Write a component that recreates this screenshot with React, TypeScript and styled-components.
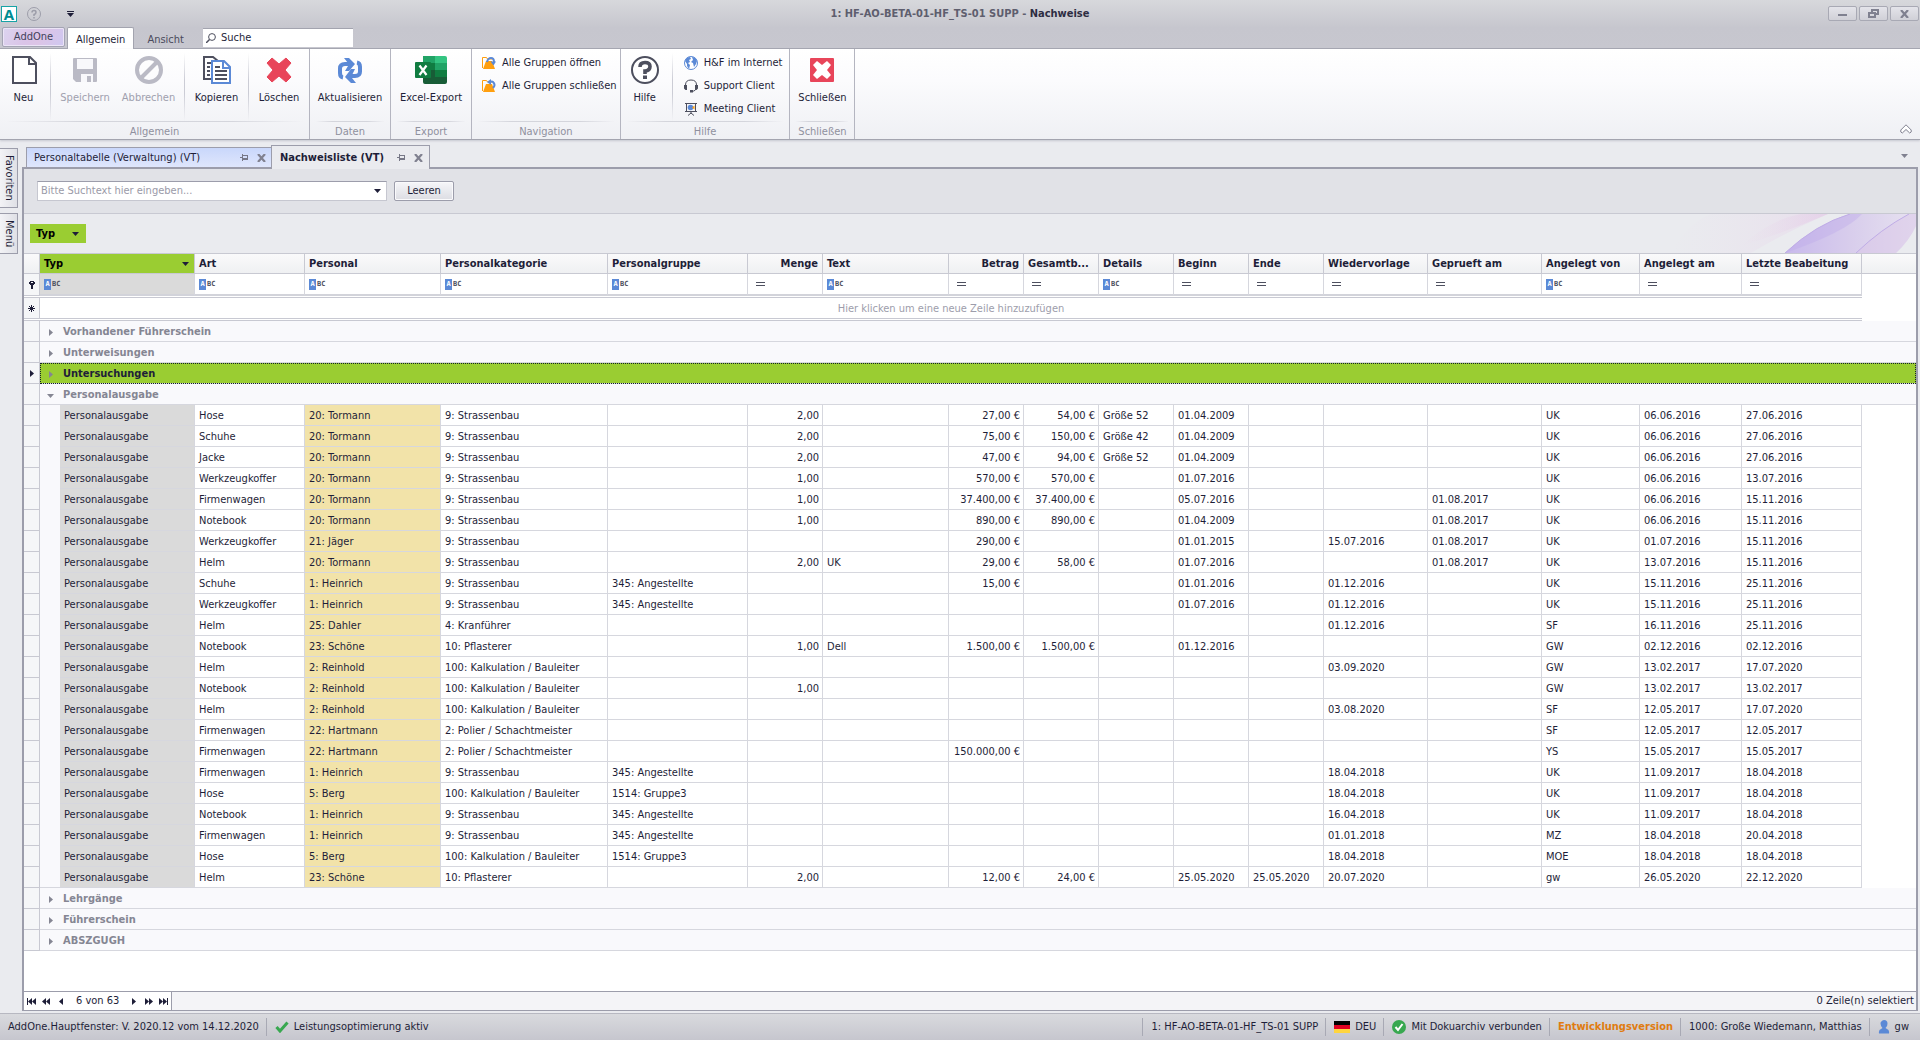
import React from "react";
import styled, { createGlobalStyle, css } from "styled-components";

const ink = "#1e1e38";
const frame = "#9c9dab";
const line = "#d6d7de";
const lineDark = "#c8c9d2";
const lime = "#9acd32";
const blue = "#5b89d6";
const red = "#e8455a";
const slate = "#4d4f5e";

const GlobalStyle = createGlobalStyle`
  * { box-sizing: border-box; }
  body {
    margin: 0;
    background: #eaebef;
    color: ${ink};
    font: 11px/14px "DejaVu Sans Condensed", "Noto Sans", sans-serif;
  }
  button, input { font: inherit; color: inherit; }
  button { border: 0; padding: 0; background: none; white-space: nowrap; }
  svg { display: block; flex: none; }
`;

const Window = styled.div`
  display: flex;
  flex-direction: column;
  min-height: 100vh;
`;

/* ---------- title bar and ribbon tabs ---------- */

const Chrome = styled.header`
  background: linear-gradient(#d7d8dc, #c6c6ce 28px, #c7c7cf);
  border-bottom: 1px solid #a3a4af;
`;

const TitleBar = styled.div`
  display: grid;
  grid-template-columns: 1fr auto 1fr;
  align-items: center;
  height: 27px;
`;

const QuickAccess = styled.div`
  display: flex;
  align-items: center;
  gap: 10px;
  padding-left: 1px;
`;

const Logo = styled.span`
  width: 16px;
  height: 16px;
  border: 1px solid #18a3a6;
  background: #fff;
  color: #008c92;
  font: bold 15px/14px "Open Sans", sans-serif;
  text-align: center;
`;

const QuickButton = styled.button<{ $gap?: boolean }>`
  display: flex;
  margin-left: ${(p) => (p.$gap ? "16px" : "0")};
`;

const Title = styled.h1`
  margin: 0;
  font-size: 11px;
  font-weight: bold;
  color: #5e5e6e;
  strong { color: #2d2d42; }
`;

const WindowButtons = styled.div`
  display: flex;
  justify-content: flex-end;
  gap: 2px;
  padding-right: 1px;
`;

const WindowButton = styled.button`
  display: flex;
  align-items: center;
  justify-content: center;
  width: 29px;
  height: 15px;
  border: 1px solid #a8a9b4;
  border-radius: 2px;
  background: linear-gradient(#e4e4ea, #d0d0d7);
`;

const TabStrip = styled.nav`
  display: flex;
  align-items: flex-end;
  height: 21px;
  padding-left: 2px;
`;

const AppButton = styled.button`
  width: 63px;
  height: 20px;
  margin-bottom: 1px;
  border: 1px solid #a4a4b4;
  border-radius: 2px;
  box-shadow: inset 0 0 0 1px #ebe4f6;
  background: linear-gradient(115deg, #dcd4ef, #dac4e8 40%, #dcc4e6 60%, #cfc8f1);
  color: #42425a;
`;

const RibbonTab = styled.button<{ $active?: boolean }>`
  height: 21px;
  padding: 2px 8px 0;
  margin: 0 3px -1px 2px;
  color: #4a4a5c;
  ${(p) =>
    p.$active &&
    css`
      height: 22px;
      border: 1px solid #a3a4af;
      border-bottom: 0;
      border-radius: 2px 2px 0 0;
      background: #fff;
      color: ${ink};
    `}
`;

const RibbonSearch = styled.label`
  display: flex;
  align-items: center;
  gap: 5px;
  width: 150px;
  height: 19px;
  margin: 0 0 1px 8px;
  padding-left: 3px;
  border-top: 1px solid #a3a4af;
  background: #fff;
`;

const BareInput = styled.input`
  flex: 1;
  min-width: 0;
  padding: 0;
  border: 0;
  outline: 0;
  background: none;
  &::placeholder { color: #9a9aa8; opacity: 1; }
`;

/* ---------- ribbon ---------- */

const Ribbon = styled.section`
  display: flex;
  height: 91px;
  background: linear-gradient(#fff, #fbfbfd 35%, #eff0f4);
  border-bottom: 1px solid #a3a4af;
  box-shadow: 0 1px 2px #c6c7d0;
`;

const Group = styled.div`
  display: flex;
  flex-direction: column;
  border-right: 1px solid #b4b5c0;
`;

const GroupBody = styled.div<{ $end?: boolean }>`
  display: flex;
  flex: 1;
  padding-right: ${(p) => (p.$end ? "3px" : "0")};
`;

const GroupCaption = styled.div`
  height: 18px;
  margin: 0 6px;
  padding-top: 3px;
  border-top: 1px solid;
  border-image: linear-gradient(90deg, transparent, #d4d5dc 25%, #d4d5dc 75%, transparent) 1;
  color: #8f909e;
  text-align: center;
`;

const GroupDivider = styled.span`
  width: 1px;
  margin: 4px 3px 0;
  background: linear-gradient(transparent, #cbccd5 40%, #cbccd5 60%, transparent);
`;

const LargeButton = styled.button<{ $width: number }>`
  display: flex;
  flex-direction: column;
  align-items: center;
  gap: 7px;
  width: ${(p) => p.$width}px;
  padding-top: 7px;
  &:disabled { color: #a0a0ae; }
`;

const SmallList = styled.div<{ $tight?: boolean }>`
  display: flex;
  flex-direction: column;
  padding: ${(p) => (p.$tight ? "2px 6px 0 6px" : "2px 2px 0 8px")};
`;

const SmallButton = styled.button`
  display: flex;
  align-items: center;
  gap: 6px;
  height: 23px;
  padding: 0 1px 0 2px;
`;

const Collapse = styled.button`
  align-self: flex-end;
  margin: 0 8px 5px auto;
`;

/* ---------- workspace ---------- */

const Workspace = styled.div`
  display: flex;
  flex: 1;
  padding: 5px 2px 2px 0;
`;

const SideTabs = styled.nav`
  display: flex;
  flex-direction: column;
  gap: 5px;
  width: 22px;
  padding-top: 3px;
`;

const SideTab = styled.button`
  width: 18px;
  padding: 6px 0;
  border: 1px solid ${frame};
  border-left: 0;
  background: linear-gradient(90deg, #f3f3f6, #dfe0e6);
  writing-mode: vertical-rl;
  line-height: 16px;
  text-align: left;
`;

const DocumentArea = styled.div`
  display: flex;
  flex: 1;
  flex-direction: column;
  min-width: 0;
`;

const DocTabs = styled.div`
  display: flex;
  align-items: flex-end;
  height: 22px;
  padding-left: 4px;
  position: relative;
`;

const DocTab = styled.div<{ $active?: boolean }>`
  display: flex;
  align-items: center;
  gap: 12px;
  height: ${(p) => (p.$active ? "24px" : "20px")};
  width: ${(p) => (p.$active ? "159px" : "245px")};
  margin-bottom: ${(p) => (p.$active ? "-2px" : "0")};
  padding: 0 ${(p) => (p.$active ? "6px" : "5px")} 0 ${(p) => (p.$active ? "8px" : "7px")};
  border: 1px solid ${frame};
  border-bottom: 0;
  border-right-width: ${(p) => (p.$active ? "1px" : "0")};
  background: ${(p) => (p.$active ? "#eaebef" : "linear-gradient(#c9d7fb, #dfe6fc)")};
  font-weight: ${(p) => (p.$active ? "bold" : "normal")};
  span { flex: 1; white-space: nowrap; }
`;

const TabTools = styled.div`
  display: flex;
  align-items: center;
  gap: 9px;
`;

const TabMenu = styled.button`
  align-self: center;
  margin: 0 10px 0 auto;
`;

const Panel = styled.main`
  display: flex;
  flex: 1;
  flex-direction: column;
  border: 2px solid ${frame};
  border-bottom-width: 1px;
  background: #fff;
`;

const SearchBar = styled.form`
  display: flex;
  align-items: center;
  gap: 7px;
  height: 45px;
  padding: 0 0 1px 13px;
  background: #e1e2e7;
  border-bottom: 1px solid ${lineDark};
`;

const Combo = styled.div`
  display: flex;
  align-items: center;
  width: 350px;
  height: 20px;
  padding: 0 5px 0 3px;
  border: 1px solid #c6c7d0;
  border-top-color: ${frame};
  background: #fff;
`;

const PushButton = styled.button`
  width: 60px;
  height: 20px;
  border: 1px solid ${frame};
  border-radius: 2px;
  box-shadow: inset 0 0 0 1px #fafafc;
  background: linear-gradient(#f6f6f9, #dcdde3);
`;

const GroupPanel = styled.div`
  display: flex;
  justify-content: space-between;
  height: 39px;
  background: #eaebef;
`;

const GroupChip = styled.button`
  display: flex;
  align-items: center;
  justify-content: space-between;
  width: 56px;
  height: 19px;
  margin: 10px 0 0 6px;
  padding: 0 7px 0 6px;
  background: ${lime};
  color: #000;
  font-weight: bold;
`;

/* ---------- data grid ---------- */

const Grid = styled.table`
  width: 100%;
  table-layout: fixed;
  border-collapse: separate;
  border-spacing: 0;
  border-top: 1px solid ${lineDark};
`;

const Th = styled.th<{ $right?: boolean; $sorted?: boolean }>`
  height: 20px;
  padding: 0 4px;
  border-right: 1px solid ${lineDark};
  border-bottom: 1px solid ${lineDark};
  background: ${(p) => (p.$sorted ? lime : "linear-gradient(#fafafb, #eff0f2)")};
  text-align: ${(p) => (p.$right ? "right" : "left")};
  white-space: nowrap;
  overflow: hidden;
  text-overflow: ellipsis;
  &:last-child { border-right: 0; }
`;

const SortLabel = styled.div`
  display: flex;
  align-items: center;
  justify-content: space-between;
  padding-right: 1px;
  color: #000;
`;

const Marker = styled.th`
  height: 21px;
  padding: 0;
  border-right: 1px solid ${lineDark};
  border-bottom: 1px solid ${lineDark};
  background: #f5f6f8;
  svg { margin: 0 auto; }
`;

const FilterCell = styled.td<{ $locked?: boolean; $number?: boolean }>`
  height: 22px;
  padding: 0 ${(p) => (p.$number ? "8px" : "4px")};
  border-right: 1px solid ${line};
  border-bottom: 2px solid #d2d3da;
  background: ${(p) => (p.$locked ? "#dadada" : "#fff")};
`;

const Spacer = styled.td`
  height: 2px;
  padding: 0;
  border-bottom: 1px solid ${lineDark};
`;

const NewRowCell = styled.td`
  padding: 2px 0 0;
  border-bottom: 1px solid ${lineDark};
  color: #9d9dab;
  text-align: center;
`;

const Plain = styled.td`
  padding: 0;
`;

const GroupCell = styled.td<{ $current?: boolean }>`
  height: 21px;
  padding: 2px 0 0;
  border-bottom: 1px solid ${line};
  background: #f9f9fc;
  font-weight: bold;
  color: #858693;
  ${(p) =>
    p.$current &&
    css`
      color: ${ink};
      background: ${lime};
      outline: 1px dotted #14202a;
      outline-offset: -1px;
    `}
`;

const GroupToggle = styled.button`
  display: flex;
  align-items: center;
  gap: 9px;
  padding-left: 7px;
`;

const Indent = styled.td`
  padding: 0;
  border-bottom: 1px solid ${line};
  background: #f9f9fc;
`;

const Cell = styled.td<{ $right?: boolean; $tone?: string }>`
  height: 21px;
  padding: 2px ${(p) => (p.$right ? "3px" : "4px")} 0;
  border-right: 1px solid ${line};
  border-bottom: 1px solid ${line};
  background: ${(p) => p.$tone || "#fff"};
  text-align: ${(p) => (p.$right ? "right" : "left")};
  white-space: nowrap;
`;

const TextFilter = styled.button`
  display: flex;
  align-items: center;
  gap: 1px;
  color: ${slate};
  font: bold 7px/11px "DejaVu Sans Mono", monospace;
  b { width: 7px; background: ${blue}; color: #fff; }
`;

const EqualsFilter = styled.button`
  display: block;
  width: 9px;
  height: 4px;
  border: solid ${slate};
  border-width: 1px 0;
`;

const Footer = styled.footer`
  display: flex;
  align-items: center;
  justify-content: space-between;
  height: 19px;
  margin-top: auto;
  padding-right: 2px;
  border-top: 1px solid ${frame};
  background: #f4f4f7;
`;

const Pager = styled.div`
  display: flex;
  align-items: center;
  gap: 5px;
  height: 18px;
  padding: 0 2px;
  border-right: 1px solid ${frame};
  background: #fff;
  button { display: flex; justify-content: center; width: 10px; }
`;

const PagerText = styled.span`
  padding: 0 5px;
`;

/* ---------- status bar ---------- */

const StatusBar = styled.footer`
  display: flex;
  align-items: center;
  height: 27px;
  padding-right: 4px;
  border-top: 1px solid #b7b8c1;
  background: linear-gradient(#d9dade, #c6c6ce);
`;

const StatusItem = styled.div<{ $first?: boolean; $push?: boolean; $accent?: boolean }>`
  display: flex;
  align-items: center;
  gap: 5px;
  height: 18px;
  margin-left: ${(p) => (p.$push ? "auto" : "0")};
  padding: 0 7px 0 8px;
  border-left: ${(p) => (p.$first ? "0" : "1px solid #a8a9b4")};
  color: ${(p) => (p.$accent ? "#e07c10" : ink)};
  font-weight: ${(p) => (p.$accent ? "bold" : "normal")};
  white-space: nowrap;
`;

/* ---------- icons ---------- */

const Caret = ({ color = ink, w = 7 }: { color?: string; w?: number }) => (
  <svg width={w} height="4" viewBox="0 0 7 4"><path d="M0 0h7L3.500 4z" fill={color} /></svg>
);

const DocIcon = () => (
  <svg width="28" height="28" viewBox="0 0 28 28">
    <path d="M3 1h17l6 6v20H3z" fill="#fff" stroke={slate} strokeWidth="2" />
    <path d="M19 1v7h7" fill="none" stroke={slate} strokeWidth="2" />
  </svg>
);

const SaveIcon = () => (
  <svg width="28" height="28" viewBox="0 0 28 28">
    <path d="M3 2h22q1 0 1 1v22q0 1-1 1H5l-3-3V3q0-1 1-1z" fill="#babac5" />
    <path d="M6 3h16v10H6z" fill="#f8f8fb" />
    <path d="M10 18h12v8H10z" fill="#f8f8fb" />
    <path d="M16 20h4v6h-4z" fill="#babac5" />
  </svg>
);

const BanIcon = () => (
  <svg width="28" height="28" viewBox="0 0 28 28" fill="none" stroke="#babac5" strokeWidth="4">
    <circle cx="14" cy="14" r="12" /><path d="M5.500 22.500 22.500 5.500" />
  </svg>
);

const CopyIcon = () => (
  <svg width="28" height="28" viewBox="0 0 28 28" fill="none" strokeWidth="2">
    <path d="M8 23H1V1h9l5 4" stroke={slate} />
    <path d="M4 7h4M4 11h3M4 15h3M4 19h3" stroke={slate} />
    <path d="M9 5h12l6 6v16H9z" fill="#fff" stroke={blue} />
    <path d="M20 5v7h7" stroke={blue} />
    <path d="M12 11h5M12 15h12M12 19h12M12 23h12" stroke={slate} />
  </svg>
);

const DeleteIcon = () => (
  <svg width="28" height="28" viewBox="0 0 28 28">
    <path d="M7 2l7 6 7-6 5 5-6 7 6 7-5 5-7-6-7 6-5-5 6-7-6-7z" fill={red} stroke={red} strokeLinejoin="round" />
  </svg>
);

const RefreshIcon = () => (
  <svg width="28" height="28" viewBox="0 0 28 28">
    <path d="M7 21.500Q4 21 4 17v-4.500Q4 8 9 8h5" fill="none" stroke={blue} strokeWidth="4" />
    <path d="M21 6.500Q24 7 24 11v4.500Q24 20 19 20h-5" fill="none" stroke={blue} strokeWidth="4" />
    <path d="M8 2h5l6 6-6 7H9l3-5V7zM20 27h-5l-6-6 6-8h4l-3 6v3z" fill={blue} />
  </svg>
);

const ExcelIcon = () => (
  <svg width="32" height="28" viewBox="0 0 32 28">
    <path d="M8 0h12v7H8z" fill="#21a366" /><path d="M20 0h10q2 0 2 2v5H20z" fill="#33c481" />
    <path d="M8 7h12v7H8z" fill="#107c41" /><path d="M20 7h12v7H20z" fill="#21a366" />
    <path d="M8 14h24v7H8z" fill="#107c41" /><path d="M8 14h12v7H8zM8 21h24v5q0 2-2 2H10q-2 0-2-2z" fill="#185c37" />
    <rect y="6" width="16" height="16" rx="1" fill="#107c41" />
    <path d="M4.500 9.500l7 9.500M11.500 9.500l-7 9.500" stroke="#fff" strokeWidth="2.200" />
  </svg>
);

const FolderIcon = ({ up }: { up?: boolean }) => (
  <svg width="14" height="14" viewBox="0 0 14 14">
    <path d="M.5 12V1.500h4l1 1.500h5" fill="none" stroke="#ff9f0f" />
    <path d="M1 13l3-8h6l3 8z" fill="#ff9f0f" />
    {up ? (
      <path d="M11 9q3-3 0-6-1-1-3 0" fill="none" stroke={blue} strokeWidth="2" />
    ) : (
      <path d="M5 6q1-4 4-4 3 0 3 4" fill="none" stroke={blue} strokeWidth="2" />
    )}
    <path d={up ? "M9 0v6L5 3z" : "M8.500 5.500h5.500l-2.500 4z"} fill={blue} />
  </svg>
);

const HelpIcon = () => (
  <svg width="28" height="28" viewBox="0 0 28 28" fill="none" stroke={slate}>
    <circle cx="14" cy="14" r="13" strokeWidth="2" fill="#fff" />
    <path d="M9 11q0-4.500 5-4.500t5 4-5 4.500v3" strokeWidth="3.600" /><path d="M14 19.500v3.500" strokeWidth="4" />
  </svg>
);

const GlobeIcon = () => (
  <svg width="14" height="14" viewBox="0 0 14 14">
    <circle cx="7" cy="7" r="6.500" fill="#fff" stroke={blue} />
    <path d="M1 5q1-4 5-4l1 2-2 1 1 2-2 1 2 2-1 4-2-3v-2zM8 1q4 0 5 4l-1 3-2 3-1-4-2-1 2-2z" fill={blue} />
  </svg>
);

const HeadsetIcon = () => (
  <svg width="14" height="14" viewBox="0 0 14 14">
    <path d="M1.500 8V6q0-5 5.500-5t5.500 5v2q0 4-5 4.500" fill="none" stroke={slate} />
    <path d="M0 6h3v5H1.500L0 9.500zM14 6h-3v5h1.500L14 9.500zM6 11h3v2.500H6z" fill={slate} />
  </svg>
);

const MeetingIcon = () => (
  <svg width="14" height="14" viewBox="0 0 14 14">
    <path d="M1 1.500h12M2.500 2v7.500h9V2M1 9.500h12M7 10v2M4 13.500L7 11l3 2.500" fill="none" stroke={slate} />
    <circle cx="6.500" cy="5.500" r="2.800" fill={blue} /><path d="M8 5.500l2.500-2v4z" fill="#ff9f0f" />
  </svg>
);

const CloseSquareIcon = () => (
  <svg width="28" height="28" viewBox="0 0 28 28">
    <rect x="2" y="2" width="24" height="24" rx="1" fill={red} />
    <path d="M9 5l5 4 5-4 4 4-4 5 4 5-4 4-5-4-5 4-4-4 4-5-4-5z" fill="#fff" />
  </svg>
);

const PinIcon = () => (
  <svg width="8" height="7" viewBox="0 0 8 7" fill="#777887">
    <path d="M0 3h2v1H0zM2 0h1v7H2zM3 1h5v1H3zM7 2h1v2H7zM3 4h5v2H3z" />
  </svg>
);

const CrossIcon = () => (
  <svg width="9" height="8" viewBox="0 0 9 8">
    <path d="M1 0l7 8M8 0L1 8" stroke="#808190" strokeWidth="2.200" />
  </svg>
);

const CheckIcon = () => (
  <svg width="14" height="12" viewBox="0 0 14 12">
    <path d="M1.500 6l3.500 4 7.500-8.500" fill="none" stroke="#38a850" strokeWidth="3" />
  </svg>
);

const FlagIcon = () => (
  <svg width="16" height="12" viewBox="0 0 16 12">
    <path d="M0 0h16v4H0z" /><path d="M0 4h16v4H0z" fill="#e00020" /><path d="M0 8h16v4H0z" fill="#ffd53e" />
  </svg>
);

const ConnectedIcon = () => (
  <svg width="14" height="14" viewBox="0 0 14 14">
    <circle cx="7" cy="7" r="7" fill="#38a850" /><path d="M3.500 7l2.500 3 4.500-6" fill="none" stroke="#fff" strokeWidth="2" />
  </svg>
);

const UserIcon = () => (
  <svg width="12" height="14" viewBox="0 0 12 14">
    <path d="M6 0q3.500 0 3.500 3.500T7.500 8l3 2q1 2 .5 3.500H1Q.5 12 1.500 10l3-2Q2.500 6 2.500 3.500T6 0z" fill={blue} />
  </svg>
);

const Petals = () => (
  <svg width="250" height="39" viewBox="0 0 250 39" aria-hidden="true">
    <defs>
      <linearGradient id="rose" x1="0" x2="1"><stop offset="0" stopColor="#e9d5ea" stopOpacity="0" /><stop offset="1" stopColor="#e3c4e6" stopOpacity=".8" /></linearGradient>
      <linearGradient id="lilac" x1="0" x2="1"><stop offset="0" stopColor="#c8b9ec" /><stop offset=".5" stopColor="#d8cdec" /><stop offset="1" stopColor="#e7e2f0" /></linearGradient>
    </defs>
    <path d="M5 39Q20 10 45 0H162Q120 18 85 39z" fill="url(#rose)" opacity=".4" />
    <path d="M75 32Q105 5 135 0H162Q120 18 75 32z" fill="url(#rose)" opacity=".6" />
    <path d="M119 39Q150 10 184 0H250V12Q243 27 230 39z" fill="url(#lilac)" />
    <path d="M119 39Q150 10 184 0H196Q180 18 119 39z" fill="#bda9ea" opacity=".4" />
    <path d="M190 39Q215 15 243 0h7v12q-7 15-20 27z" fill="#dac6e8" opacity=".5" />
    <path d="M119 39Q150 10 184 0M190 39Q215 15 243 0" fill="none" stroke="#bface6" />
  </svg>
);

/* One pager arrow shape: n triangles, optionally with a stop bar. */
const Arrow = ({ n = 1, bar, flip }: { n?: number; bar?: boolean; flip?: boolean }) => {
  const w = n * 4 + (bar ? 2 : 0);
  return (
    <svg width={w} height="7" viewBox={`0 0 ${w} 7`}>
      <g transform={flip ? `translate(${w} 0) scale(-1 1)` : undefined} fill={ink}>
        {Array.from({ length: n }, (_, i) => <path key={i} d={`M${i * 4} 0l4 3.500-4 3.500z`} />)}
        {bar && <path d={`M${n * 4} 0h1v7h-1z`} />}
      </g>
    </svg>
  );
};

/* ---------- data ---------- */

type Column = { title: string; width: number; right?: boolean; headLeft?: boolean; filter: "text" | "equals" };

const columns: Column[] = [
  { title: "Art", width: 110, filter: "text" },
  { title: "Personal", width: 136, filter: "text" },
  { title: "Personalkategorie", width: 167, filter: "text" },
  { title: "Personalgruppe", width: 140, filter: "text" },
  { title: "Menge", width: 75, right: true, filter: "equals" },
  { title: "Text", width: 126, filter: "text" },
  { title: "Betrag", width: 75, right: true, filter: "equals" },
  { title: "Gesamtb...", width: 75, right: true, headLeft: true, filter: "equals" },
  { title: "Details", width: 75, filter: "text" },
  { title: "Beginn", width: 75, filter: "equals" },
  { title: "Ende", width: 75, filter: "equals" },
  { title: "Wiedervorlage", width: 104, filter: "equals" },
  { title: "Geprueft am", width: 114, filter: "equals" },
  { title: "Angelegt von", width: 98, filter: "text" },
  { title: "Angelegt am", width: 102, filter: "equals" },
  { title: "Letzte Beabeitung", width: 120, filter: "equals" },
];

const rows = `
Hose|20: Tormann|9: Strassenbau||2,00||27,00 €|54,00 €|Größe 52|01.04.2009||||UK|06.06.2016|27.06.2016
Schuhe|20: Tormann|9: Strassenbau||2,00||75,00 €|150,00 €|Größe 42|01.04.2009||||UK|06.06.2016|27.06.2016
Jacke|20: Tormann|9: Strassenbau||2,00||47,00 €|94,00 €|Größe 52|01.04.2009||||UK|06.06.2016|27.06.2016
Werkzeugkoffer|20: Tormann|9: Strassenbau||1,00||570,00 €|570,00 €||01.07.2016||||UK|06.06.2016|13.07.2016
Firmenwagen|20: Tormann|9: Strassenbau||1,00||37.400,00 €|37.400,00 €||05.07.2016|||01.08.2017|UK|06.06.2016|15.11.2016
Notebook|20: Tormann|9: Strassenbau||1,00||890,00 €|890,00 €||01.04.2009|||01.08.2017|UK|06.06.2016|15.11.2016
Werkzeugkoffer|21: Jäger|9: Strassenbau||||290,00 €|||01.01.2015||15.07.2016|01.08.2017|UK|01.07.2016|15.11.2016
Helm|20: Tormann|9: Strassenbau||2,00|UK|29,00 €|58,00 €||01.07.2016|||01.08.2017|UK|13.07.2016|15.11.2016
Schuhe|1: Heinrich|9: Strassenbau|345: Angestellte|||15,00 €|||01.01.2016||01.12.2016||UK|15.11.2016|25.11.2016
Werkzeugkoffer|1: Heinrich|9: Strassenbau|345: Angestellte||||||01.07.2016||01.12.2016||UK|15.11.2016|25.11.2016
Helm|25: Dahler|4: Kranführer|||||||||01.12.2016||SF|16.11.2016|25.11.2016
Notebook|23: Schöne|10: Pflasterer||1,00|Dell|1.500,00 €|1.500,00 €||01.12.2016||||GW|02.12.2016|02.12.2016
Helm|2: Reinhold|100: Kalkulation / Bauleiter|||||||||03.09.2020||GW|13.02.2017|17.07.2020
Notebook|2: Reinhold|100: Kalkulation / Bauleiter||1,00|||||||||GW|13.02.2017|13.02.2017
Helm|2: Reinhold|100: Kalkulation / Bauleiter|||||||||03.08.2020||SF|12.05.2017|17.07.2020
Firmenwagen|22: Hartmann|2: Polier / Schachtmeister|||||||||||SF|12.05.2017|12.05.2017
Firmenwagen|22: Hartmann|2: Polier / Schachtmeister||||150.000,00 €|||||||YS|15.05.2017|15.05.2017
Firmenwagen|1: Heinrich|9: Strassenbau|345: Angestellte||||||||18.04.2018||UK|11.09.2017|18.04.2018
Hose|5: Berg|100: Kalkulation / Bauleiter|1514: Gruppe3||||||||18.04.2018||UK|11.09.2017|18.04.2018
Notebook|1: Heinrich|9: Strassenbau|345: Angestellte||||||||16.04.2018||UK|11.09.2017|18.04.2018
Firmenwagen|1: Heinrich|9: Strassenbau|345: Angestellte||||||||01.01.2018||MZ|18.04.2018|20.04.2018
Hose|5: Berg|100: Kalkulation / Bauleiter|1514: Gruppe3||||||||18.04.2018||MOE|18.04.2018|18.04.2018
Helm|23: Schöne|10: Pflasterer||2,00||12,00 €|24,00 €||25.05.2020|25.05.2020|20.07.2020||gw|26.05.2020|22.12.2020
`.trim().split("\n").map((r) => r.split("|"));

const GroupRow = ({ name, open, current }: { name: string; open?: boolean; current?: boolean }) => (
  <tr>
    <Marker>{current && <Arrow />}</Marker>
    <GroupCell colSpan={19} $current={current}>
      <GroupToggle aria-expanded={!!open}>
        <svg width="7" height="7" viewBox="0 0 7 7" fill="#858693">
          <path d={open ? "M0 2h7L3.500 6z" : "M2 0l4 3.500-4 3.500z"} />
        </svg>
        {name}
      </GroupToggle>
    </GroupCell>
  </tr>
);

const TextFilterButton = ({ label }: { label: string }) => (
  <TextFilter aria-label={label}><b>A</b>BC</TextFilter>
);

const DataGrid = () => (
  <Grid>
    <colgroup>
      <col style={{ width: 16 }} />
      <col style={{ width: 20 }} />
      <col style={{ width: 135 }} />
      {columns.map((c) => <col key={c.title} style={{ width: c.width }} />)}
      <col />
    </colgroup>
    <thead>
      <tr>
        <Th />
        <Th colSpan={2} $sorted><SortLabel>Typ<Caret /></SortLabel></Th>
        {columns.map((c) => <Th key={c.title} $right={c.right && !c.headLeft}>{c.title}</Th>)}
        <Th />
      </tr>
    </thead>
    <tbody>
      <tr>
        <Marker>
          <svg width="6" height="8" viewBox="0 0 6 8"><path d="M0 1h1V0h4v1h1v2H5v1H4v4H2V4H1V3H0z" fill={ink} /><path d="M2 1h2v1H2z" fill="#f5f6f8" /></svg>
        </Marker>
        <FilterCell colSpan={2} $locked><TextFilterButton label="Filter Typ" /></FilterCell>
        {columns.map((c) => (
          <FilterCell key={c.title} $number={c.filter === "equals"}>
            {c.filter === "text" ? <TextFilterButton label={`Filter ${c.title}`} /> : <EqualsFilter aria-label={`Filter ${c.title}`} />}
          </FilterCell>
        ))}
        <Plain />
      </tr>
      <tr><Spacer colSpan={19} /><Plain /></tr>
      <tr>
        <Marker>
          <svg width="7" height="7" viewBox="0 0 7 7"><path d="M3.500 0v7M0 3.500h7M1 1l5 5M6 1L1 6" stroke={ink} /></svg>
        </Marker>
        <NewRowCell colSpan={18}>Hier klicken um eine neue Zeile hinzuzufügen</NewRowCell>
        <Plain />
      </tr>
      <tr><Spacer colSpan={19} /><Plain /></tr>
      <GroupRow name="Vorhandener Führerschein" />
      <GroupRow name="Unterweisungen" />
      <GroupRow name="Untersuchungen" current />
      <GroupRow name="Personalausgabe" open />
      {rows.map((r, i) => (
        <tr key={i}>
          <Marker />
          {i === 0 && <Indent rowSpan={rows.length} />}
          <Cell $tone="#dadada">Personalausgabe</Cell>
          {columns.map((c, j) => (
            <Cell key={c.title} $right={c.right} $tone={j === 1 ? "#f2e3a9" : undefined}>{r[j]}</Cell>
          ))}
          <Plain />
        </tr>
      ))}
      <GroupRow name="Lehrgänge" />
      <GroupRow name="Führerschein" />
      <GroupRow name="ABSZGUGH" />
    </tbody>
  </Grid>
);

export default function App() {
  return (
    <Window>
      <GlobalStyle />
      <Chrome>
        <TitleBar>
          <QuickAccess>
            <Logo>A</Logo>
            <QuickButton aria-label="Hilfe">
              <svg width="14" height="14" viewBox="0 0 14 14" fill="none" stroke="#9c9da9">
                <circle cx="7" cy="7" r="6.500" /><path d="M5 5.500Q5 3.500 7 3.500t2 1.700-2 2.300V9M7 10v1.500" strokeWidth="1.500" />
              </svg>
            </QuickButton>
            <QuickButton $gap aria-label="Symbolleiste anpassen">
              <svg width="7" height="6" viewBox="0 0 7 6" fill={ink}><path d="M0 0h7v1H0zM0 2h7L3.500 6z" /></svg>
            </QuickButton>
          </QuickAccess>
          <Title>1: HF-AO-BETA-01-HF_TS-01 SUPP - <strong>Nachweise</strong></Title>
          <WindowButtons>
            <WindowButton aria-label="Minimieren"><svg width="9" height="7" viewBox="0 0 9 7"><path d="M0 4h9v2H0z" fill="#808190" /></svg></WindowButton>
            <WindowButton aria-label="Wiederherstellen"><svg width="11" height="9" viewBox="0 0 11 9" fill="none" stroke="#808190" strokeWidth="2"><path d="M4 3V1h6v4H8M1 4h6v4H1z" /></svg></WindowButton>
            <WindowButton aria-label="Fenster schließen"><CrossIcon /></WindowButton>
          </WindowButtons>
        </TitleBar>
        <TabStrip>
          <AppButton>AddOne</AppButton>
          <RibbonTab $active>Allgemein</RibbonTab>
          <RibbonTab>Ansicht</RibbonTab>
          <RibbonSearch>
            <svg width="10" height="10" viewBox="0 0 10 10" fill="none" stroke={slate}><circle cx="6" cy="4" r="3.400" /><path d="M3.500 6.500L0 10" strokeWidth="1.500" /></svg>
            <BareInput defaultValue="Suche" aria-label="Suche" />
          </RibbonSearch>
        </TabStrip>
      </Chrome>

      <Ribbon>
        <Group>
          <GroupBody $end>
            <LargeButton $width={47}><DocIcon />Neu</LargeButton>
            <GroupDivider />
            <LargeButton $width={62} disabled><SaveIcon />Speichern</LargeButton>
            <LargeButton $width={65} disabled><BanIcon />Abbrechen</LargeButton>
            <GroupDivider />
            <LargeButton $width={57}><CopyIcon />Kopieren</LargeButton>
            <GroupDivider />
            <LargeButton $width={54}><DeleteIcon />Löschen</LargeButton>
          </GroupBody>
          <GroupCaption>Allgemein</GroupCaption>
        </Group>
        <Group>
          <GroupBody><LargeButton $width={80}><RefreshIcon />Aktualisieren</LargeButton></GroupBody>
          <GroupCaption>Daten</GroupCaption>
        </Group>
        <Group>
          <GroupBody><LargeButton $width={80}><ExcelIcon />Excel-Export</LargeButton></GroupBody>
          <GroupCaption>Export</GroupCaption>
        </Group>
        <Group>
          <GroupBody>
            <SmallList>
              <SmallButton><FolderIcon />Alle Gruppen öffnen</SmallButton>
              <SmallButton><FolderIcon up />Alle Gruppen schließen</SmallButton>
            </SmallList>
          </GroupBody>
          <GroupCaption>Navigation</GroupCaption>
        </Group>
        <Group>
          <GroupBody>
            <LargeButton $width={48}><HelpIcon />Hilfe</LargeButton>
            <GroupDivider />
            <SmallList $tight>
              <SmallButton><GlobeIcon />H&amp;F im Internet</SmallButton>
              <SmallButton><HeadsetIcon />Support Client</SmallButton>
              <SmallButton><MeetingIcon />Meeting Client</SmallButton>
            </SmallList>
          </GroupBody>
          <GroupCaption>Hilfe</GroupCaption>
        </Group>
        <Group>
          <GroupBody><LargeButton $width={64}><CloseSquareIcon />Schließen</LargeButton></GroupBody>
          <GroupCaption>Schließen</GroupCaption>
        </Group>
        <Collapse aria-label="Menüband minimieren">
          <svg width="12" height="10" viewBox="0 0 12 10" fill="#fff" stroke="#808190"><path d="M6 .8L.8 6v2l1.500 1L6 5.500 9.700 9l1.500-1V6z" /></svg>
        </Collapse>
      </Ribbon>

      <Workspace>
        <SideTabs>
          <SideTab>Favoriten</SideTab>
          <SideTab>Menü</SideTab>
        </SideTabs>
        <DocumentArea>
          <DocTabs>
            <DocTab>
              <span>Personaltabelle (Verwaltung) (VT)</span>
              <TabTools>
                <button aria-label="Anheften"><PinIcon /></button>
                <button aria-label="Tab schließen"><CrossIcon /></button>
              </TabTools>
            </DocTab>
            <DocTab $active>
              <span>Nachweisliste (VT)</span>
              <TabTools>
                <button aria-label="Anheften"><PinIcon /></button>
                <button aria-label="Tab schließen"><CrossIcon /></button>
              </TabTools>
            </DocTab>
            <TabMenu aria-label="Alle Tabs"><Caret color="#808190" /></TabMenu>
          </DocTabs>
          <Panel>
            <SearchBar onSubmit={(e) => e.preventDefault()}>
              <Combo>
                <BareInput placeholder="Bitte Suchtext hier eingeben..." aria-label="Suchtext" />
                <button type="button" aria-label="Suchverlauf"><Caret /></button>
              </Combo>
              <PushButton type="reset">Leeren</PushButton>
            </SearchBar>
            <GroupPanel>
              <GroupChip>Typ<Caret /></GroupChip>
              <Petals />
            </GroupPanel>
            <DataGrid />
            <Footer>
              <Pager>
                <button aria-label="Erste Zeile"><Arrow n={2} bar flip /></button>
                <button aria-label="Seite zurück"><Arrow n={2} flip /></button>
                <button aria-label="Zeile zurück"><Arrow flip /></button>
                <PagerText>6 von 63</PagerText>
                <button aria-label="Zeile vor"><Arrow /></button>
                <button aria-label="Seite vor"><Arrow n={2} /></button>
                <button aria-label="Letzte Zeile"><Arrow n={2} bar /></button>
              </Pager>
              0 Zeile(n) selektiert
            </Footer>
          </Panel>
        </DocumentArea>
      </Workspace>

      <StatusBar>
        <StatusItem $first>AddOne.Hauptfenster: V. 2020.12 vom 14.12.2020</StatusItem>
        <StatusItem><CheckIcon />Leistungsoptimierung aktiv</StatusItem>
        <StatusItem $push>1: HF-AO-BETA-01-HF_TS-01 SUPP</StatusItem>
        <StatusItem><FlagIcon />DEU</StatusItem>
        <StatusItem><ConnectedIcon />Mit Dokuarchiv verbunden</StatusItem>
        <StatusItem $accent>Entwicklungsversion</StatusItem>
        <StatusItem>1000: Große Wiedemann, Matthias</StatusItem>
        <StatusItem><UserIcon />gw</StatusItem>
      </StatusBar>
    </Window>
  );
}
